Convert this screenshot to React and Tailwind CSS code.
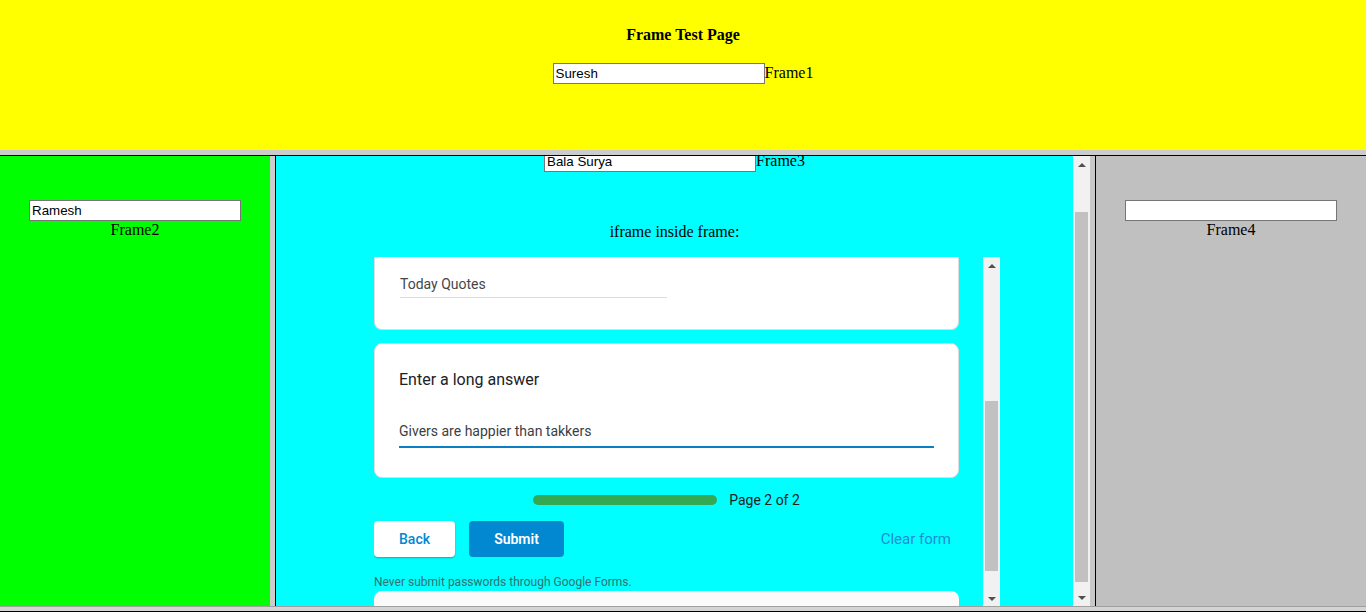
import React from 'react';

const serif = { fontFamily: '"Liberation Serif", "Times New Roman", serif' };

function TextBox({ value, className = '' }) {
    return (
        <input
            type="text"
            defaultValue={value}
            className={`inline-block h-[21px] w-[212px] border border-[#767676] bg-white px-[2px] align-baseline text-[13.33px] text-black outline-none ${className}`}
            style={{ fontFamily: '"Liberation Sans", Arial, sans-serif' }}
        />
    );
}

function ArrowUp() {
    return (
        <svg width="8" height="4" viewBox="0 0 8 4" className="block">
            <path d="M0 4 L4 0 L8 4 Z" fill="#505050" />
        </svg>
    );
}

function ArrowDown() {
    return (
        <svg width="8" height="4" viewBox="0 0 8 4" className="block">
            <path d="M0 0 L8 0 L4 4 Z" fill="#505050" />
        </svg>
    );
}

function Scrollbar({ thumbTop, thumbHeight }) {
    return (
        <div className="relative h-full w-[17px] shrink-0 bg-[#f1f1f1]">
            <div className="absolute left-0 top-0 flex h-[17px] w-[17px] items-center justify-center">
                <ArrowUp />
            </div>
            <div
                className="absolute left-[2px] w-[13px] bg-[#c1c1c1]"
                style={{ top: thumbTop, height: thumbHeight }}
            />
            <div className="absolute bottom-0 left-0 flex h-[17px] w-[17px] items-center justify-center">
                <ArrowDown />
            </div>
        </div>
    );
}

function GoogleForm() {
    return (
        <div className="flex h-full w-[626px] overflow-hidden" style={{ fontFamily: 'Roboto, "Noto Sans", sans-serif' }}>
            <div className="flex w-[585px] shrink-0 flex-col">
                <div className="h-[73px] shrink-0 rounded-b-lg border border-t-0 border-[#dadce0] bg-white pl-[25px] pt-[17px]">
                    <div className="w-[267px] border-b border-[#dadce0] pb-[3px] text-[14px] leading-5 text-[#444746]">
                        Today Quotes
                    </div>
                </div>

                <div className="mt-[13px] h-[135px] shrink-0 rounded-lg border border-[#dadce0] bg-white px-[24px] pt-[24px]">
                    <div className="text-[16px] leading-6 text-[#202124]">Enter a long answer</div>
                    <div className="mt-[29px] border-b-2 border-[#0a7fc4] pb-[5px] text-[14px] leading-5 text-[#3c4043]">
                        Givers are happier than takkers
                    </div>
                </div>

                <div className="mt-[12px] flex h-[20px] shrink-0 items-center justify-center gap-3">
                    <div className="h-[10px] w-[184px] rounded-full bg-[#34a853]" />
                    <span className="text-[14px] leading-5 text-[#202124]">Page 2 of 2</span>
                </div>

                <div className="mt-[11px] flex shrink-0 items-center">
                    <button className="h-[36px] w-[81px] rounded bg-white text-[14px] font-medium text-[#0288d1] shadow-[0_1px_2px_rgba(0,0,0,0.3)]">
                        Back
                    </button>
                    <button className="ml-[14px] h-[36px] w-[95px] rounded bg-[#0288d1] text-[14px] font-semibold text-white">
                        Submit
                    </button>
                    <button className="ml-auto mr-[8px] h-[36px] text-[15px] font-normal text-[#1e8ed4]">
                        Clear form
                    </button>
                </div>

                <div className="mt-[17px] shrink-0 text-[12px] leading-4 text-[#327070]">
                    Never submit passwords through Google Forms.
                </div>

                <div className="mt-[1px] h-[40px] shrink-0 rounded-t-lg bg-[#fafafa]" />
            </div>
            <div className="ml-[24px]">
                <Scrollbar thumbTop={144} thumbHeight={170} />
            </div>
        </div>
    );
}

export default function App() {
    return (
        <div className="flex h-[612px] w-[1366px] flex-col overflow-hidden bg-[#d4d4d4] text-black" style={serif}>
            {/* top frame */}
            <div className="h-[150px] shrink-0 bg-[#ffff00] pt-[26px] text-center">
                <h4 className="text-[16px] font-bold leading-[18px]">Frame Test Page</h4>
                <div className="mt-[18px] text-[16px] leading-[21px]">
                    <TextBox value="Suresh" />
                    Frame1
                </div>
            </div>

            <div className="h-[5px] shrink-0 bg-[#cccccc]" />

            {/* frames row */}
            <div className="flex h-[451px] shrink-0 border-t border-black">
                <div className="w-[270px] shrink-0 bg-[#00ff00] pt-[44px] text-center text-[16px] leading-[18px]">
                    <TextBox value="Ramesh" className="mx-auto block" />
                    <div>Frame2</div>
                </div>

                <div className="w-[5px] shrink-0 bg-[#cccccc]" />

                <div className="flex w-[815px] shrink-0 border-l border-black">
                    <div className="flex w-[797px] flex-col overflow-hidden bg-[#00ffff]">
                        <div className="-mt-[5px] shrink-0 text-center text-[16px] leading-[18px]">
                            <TextBox value="Bala Surya" />
                            Frame3
                        </div>
                        <div className="mt-[51px] shrink-0 text-center text-[16px] leading-[18px]">iframe inside frame:</div>
                        <div className="mt-[16px] h-[350px] shrink-0 pl-[98px]">
                            <GoogleForm />
                        </div>
                    </div>
                    <Scrollbar thumbTop={56} thumbHeight={370} />
                </div>

                <div className="w-[5px] shrink-0 bg-[#c8c8c8]" />

                <div className="flex-1 border-l border-black bg-[#c0c0c0] pt-[44px] text-center text-[16px] leading-[18px]">
                    <TextBox value="" className="mx-auto block" />
                    <div>Frame4</div>
                </div>
            </div>

            <div className="h-[6px] shrink-0 border-t border-b border-t-[#a0a0a0] border-b-black bg-[#d4d4d4]" />
        </div>
    );
}
